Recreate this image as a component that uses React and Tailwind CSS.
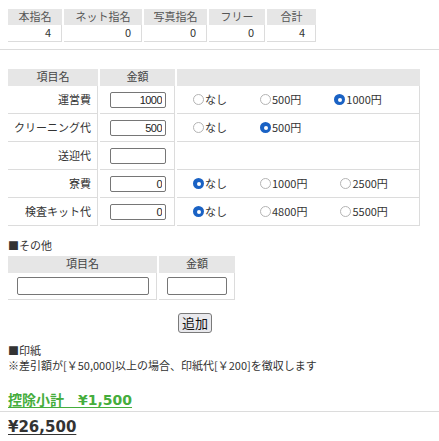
import React from "react";

const counts = [
  { label: "本指名", value: 4 },
  { label: "ネット指名", value: 0 },
  { label: "写真指名", value: 0 },
  { label: "フリー", value: 0 },
  { label: "合計", value: 4 },
];

const items = [
  { name: "運営費", value: "1000", options: ["なし", "500円", "1000円"], checked: 2 },
  { name: "クリーニング代", value: "500", options: ["なし", "500円"], checked: 1 },
  { name: "送迎代", value: "", options: [], checked: -1 },
  { name: "寮費", value: "0", options: ["なし", "1000円", "2500円"], checked: 0 },
  { name: "検査キット代", value: "0", options: ["なし", "4800円", "5500円"], checked: 0 },
];

function Radio({ checked }) {
  return checked ? (
    <span className="flex items-center justify-center shrink-0 w-[11px] h-[11px] rounded-full bg-[#1a62c4] mr-[1px]">
      <span className="w-[4px] h-[4px] rounded-full bg-white" />
    </span>
  ) : (
    <span className="inline-block shrink-0 w-[11px] h-[11px] rounded-full border border-[#b4b4b4] bg-white mr-[1px]" />
  );
}

export default function App() {
  return (
    <div className="px-2 pt-[9px] pb-2 text-[11px] leading-[15px] text-[#333] font-[Noto_Sans_CJK_JP,sans-serif] bg-white min-h-screen">
      {/* counts */}
      <div className="grid grid-cols-[54px_78px_63px_56px_49px] gap-x-[2px] w-fit">
        {counts.map((c) => (
          <div key={c.label} className="h-[16px] bg-[#e6e6e6] text-center text-[#555]">
            {c.label}
          </div>
        ))}
        {counts.map((c) => (
          <div
            key={c.label + "v"}
            className="h-[17px] text-right pr-[10px] border-b border-r border-[#dcdcdc]"
          >
            {c.value}
          </div>
        ))}
      </div>

      <div className="-mx-2 mt-[7px] border-t border-[#dcdcdc]" />

      {/* fees */}
      <div className="mt-[19px] grid grid-cols-[90px_75px_243px] gap-x-[2px] w-fit">
        <div className="h-[17px] bg-[#e6e6e6] text-center text-[#444]">項目名</div>
        <div className="h-[17px] bg-[#e6e6e6] text-center text-[#444]">金額</div>
        <div className="h-[17px] bg-[#e6e6e6]" />
        {items.map((it) => (
          <React.Fragment key={it.name}>
            <div className="h-[28px] flex items-center justify-end pr-[6px] border-b border-r border-[#dcdcdc] whitespace-nowrap">
              {it.name}
            </div>
            <div className="h-[28px] flex items-center pl-[10px] border-b border-r border-[#dcdcdc]">
              <input
                readOnly
                defaultValue={it.value}
                className="w-[56px] h-[16px] border border-[#767676] rounded-[2px] bg-white text-right px-[3px] text-[11px] tracking-tighter font-[Liberation_Sans,sans-serif] text-[#222]"
              />
            </div>
            <div className="h-[28px] flex items-center pl-[16px] border-b border-r border-[#dcdcdc] whitespace-nowrap">
              {it.options.map((o, i) => (
                <span key={o} className="flex items-center mr-[33px] whitespace-nowrap">
                  <Radio checked={i === it.checked} />
                  {o}
                </span>
              ))}
            </div>
          </React.Fragment>
        ))}
      </div>

      {/* other */}
      <div className="mt-[12px]">■その他</div>
      <div className="mt-[3px] grid grid-cols-[149px_76px] gap-x-[2px] w-fit">
        <div className="h-[17px] bg-[#e6e6e6] text-center text-[#444]">項目名</div>
        <div className="h-[17px] bg-[#e6e6e6] text-center text-[#444]">金額</div>
        <div className="h-[27px] flex items-center pl-[9px] border-b border-r border-[#dcdcdc]">
          <input readOnly className="w-[132px] h-[18px] border border-[#767676] rounded-[2px] bg-white" />
        </div>
        <div className="h-[27px] flex items-center pl-[8px] border-b border-r border-[#dcdcdc]">
          <input readOnly className="w-[60px] h-[18px] border border-[#767676] rounded-[2px] bg-white" />
        </div>
      </div>

      <div className="mt-[13px] pl-[170px]">
        <button className="h-[20px] px-[3px] border border-[#7a7a7a] rounded-[3px] bg-[#e9e9ed] text-[13px] leading-[18px] text-[#111]">
          追加
        </button>
      </div>

      {/* stamp */}
      <div className="mt-[10px]">■印紙</div>
      <div>※差引額が[￥50,000]以上の場合、印紙代[￥200]を徴収します</div>

      <div className="mt-[20px] pb-[3px] border-b border-[#dcdcdc] -mx-2 px-2">
        <span className="text-[14px] font-bold text-[#45ad3c] underline underline-offset-2 font-[DejaVu_Sans,Noto_Sans_CJK_JP,sans-serif]">
          控除小計　¥1,500
        </span>
      </div>
      <div className="mt-[8px] text-[15px] font-bold text-[#333] underline underline-offset-2 font-[DejaVu_Sans,Noto_Sans_CJK_JP,sans-serif]">
        ¥26,500
      </div>
    </div>
  );
}
